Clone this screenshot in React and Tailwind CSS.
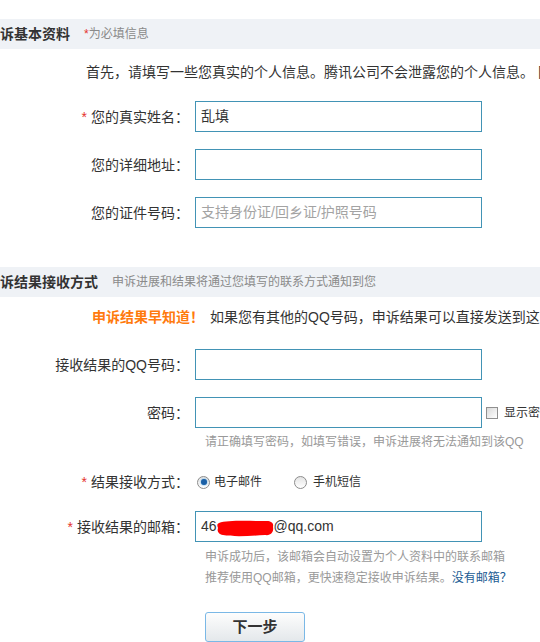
import { useState } from 'react';

const font = "font-['Liberation_Sans','Noto_Sans_CJK_SC',sans-serif]";

function Star() {
  return <span className="text-[#e5322d] mr-[4px]">*</span>;
}

function Row({ label, star, children, className = '' }) {
  return (
    <div className={'flex items-center ' + className}>
      <div className="w-[190px] shrink-0 text-right text-[14px] leading-[20px] text-[#333] whitespace-nowrap pr-[1px]">
        {star && <Star />}
        {label}
      </div>
      <div className="ml-[5px] flex items-center whitespace-nowrap">{children}</div>
    </div>
  );
}

function TextBox({ value, placeholder, children }) {
  return (
    <div className="w-[287px] h-[31px] border border-[#4293b5] bg-white flex items-center px-[5px] text-[14px] text-[#333] relative">
      {children ? children : value ? value : <span className="text-[#a3a3a3]">{placeholder}</span>}
    </div>
  );
}

function Radio({ checked }) {
  return (
    <span className="w-[13px] h-[13px] rounded-full border border-[#8c8c8c] bg-gradient-to-b from-[#e4e4e4] to-[#ffffff] flex items-center justify-center shrink-0">
      {checked && <span className="w-[6px] h-[6px] rounded-full bg-[#1a5fa6] shadow-[0_0_2px_#3d9be0]" />}
    </span>
  );
}

function Header({ title, children }) {
  return (
    <div className="h-[30px] bg-[#eff2f6] flex items-center whitespace-nowrap">
      <span className="text-[14px] font-bold text-[#333]">{title}</span>
      <span className="ml-[14px] text-[12px] text-[#8a8a8a]">{children}</span>
    </div>
  );
}

export default function App() {
  const [way, setWay] = useState('mail');

  return (
    <div className={'w-[540px] h-[642px] overflow-hidden bg-white ' + font}>
      <div className="h-[19px]" />
      <Header title="诉基本资料">
        <span className="text-[#e5322d]">*</span>为必填信息
      </Header>

      <div className="mt-[13px] h-[20px] leading-[20px] pl-[86px] text-[14px] text-[#333] whitespace-nowrap">
        首先，请填写一些您真实的个人信息。腾讯公司不会泄露您的个人信息。 同时
      </div>

      <Row label="您的真实姓名：" star className="mt-[19px]">
        <TextBox value="乱填" />
      </Row>
      <Row label="您的详细地址：" className="mt-[17px]">
        <TextBox />
      </Row>
      <Row label="您的证件号码：" className="mt-[17px]">
        <TextBox placeholder="支持身份证/回乡证/护照号码" />
      </Row>

      <div className="mt-[39px]">
        <Header title="诉结果接收方式">申诉进展和结果将通过您填写的联系方式通知到您</Header>
      </div>

      <div className="mt-[10px] h-[20px] leading-[20px] pl-[92px] text-[14px] text-[#333] whitespace-nowrap">
        <span className="font-bold text-[#ff7a0d]">申诉结果早知道！</span>
        <span className="ml-[6px]">如果您有其他的QQ号码，申诉结果可以直接发送到这个QQ上</span>
      </div>

      <Row label="接收结果的QQ号码：" className="mt-[22px]">
        <TextBox />
      </Row>
      <Row label="密码：" className="mt-[17px]">
        <TextBox />
        <span className="ml-[4px] w-[12px] h-[12px] border border-[#8f8f8f] bg-gradient-to-br from-[#d9d9d9] to-[#ffffff] shrink-0" />
        <span className="ml-[6px] text-[12px] text-[#333]">显示密码</span>
      </Row>
      <div className="mt-[6px] pl-[205px] text-[12px] leading-[16px] text-[#999] whitespace-nowrap">
        请正确填写密码，如填写错误，申诉进展将无法通知到该QQ
      </div>

      <Row label="结果接收方式：" star className="mt-[22px]">
        <label className="flex items-center ml-[2px] cursor-pointer" onClick={() => setWay('mail')}>
          <Radio checked={way === 'mail'} />
          <span className="ml-[4px] text-[12px] text-[#333]">电子邮件</span>
        </label>
        <label className="flex items-center ml-[32px] cursor-pointer" onClick={() => setWay('sms')}>
          <Radio checked={way === 'sms'} />
          <span className="ml-[6px] text-[12px] text-[#333]">手机短信</span>
        </label>
      </Row>

      <Row label="接收结果的邮箱：" star className="mt-[19px]">
        <TextBox>
          <span>46</span>
          <svg width="57" height="18" viewBox="0 0 57 18" className="mt-[3px]">
            <path d="M2 4 C10 1 30 2 50 2 C54 2 57 4 56 8 C57 13 54 17 48 16 C34 17 16 18 6 16 C1 15 0 12 1 9 C0 6 0 5 2 4 Z" fill="#ff0000" />
          </svg>
          <span>@qq.com</span>
        </TextBox>
      </Row>

      <div className="mt-[5px] pl-[205px] text-[12px] leading-[21px] text-[#999] whitespace-nowrap">
        <div>申诉成功后，该邮箱会自动设置为个人资料中的联系邮箱</div>
        <div>
          推荐使用QQ邮箱，更快速稳定接收申诉结果。<a href="#" className="text-[#1b5b93]">没有邮箱？</a>
        </div>
      </div>

      <div className="mt-[23px] pl-[205px]">
        <button className="w-[100px] h-[30px] rounded-[3px] border border-[#7ab8e6] bg-gradient-to-b from-[#fdfdfd] to-[#e4e8eb] text-[15px] font-bold text-[#333]">
          下一步
        </button>
      </div>
    </div>
  );
}
